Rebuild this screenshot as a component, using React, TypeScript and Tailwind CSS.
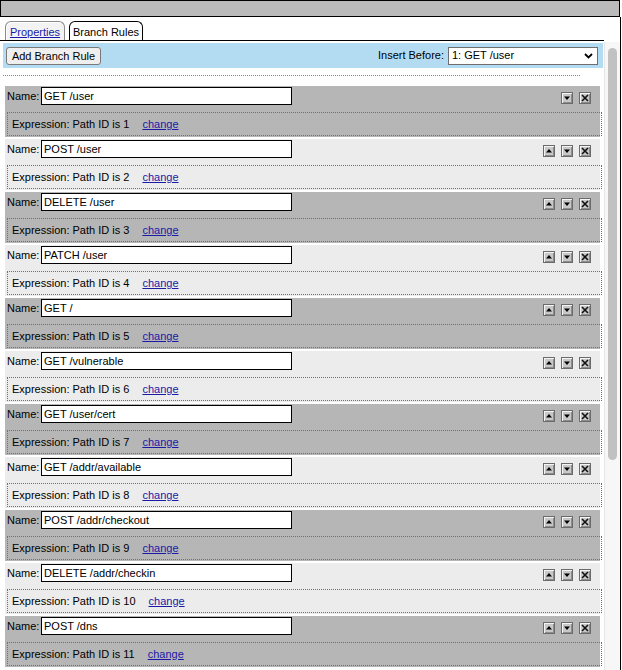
import React from "react";

const rules = [
  "GET /user",
  "POST /user",
  "DELETE /user",
  "PATCH /user",
  "GET /",
  "GET /vulnerable",
  "GET /user/cert",
  "GET /addr/available",
  "POST /addr/checkout",
  "DELETE /addr/checkin",
  "POST /dns",
];

function IconBtn({ kind }: { kind: "up" | "down" | "del" }) {
  return (
    <div className="w-[12px] h-[12px] border border-[#6b6b6b] bg-[#c8c8c8] shadow-[inset_1px_1px_0_#f4f4f4,inset_-1px_-1px_0_#8c8c8c] flex items-center justify-center">
      <svg width="10" height="10" viewBox="0 0 10 10">
        {kind === "up" && <polygon points="2,6.5 8,6.5 5,3" fill="#000" />}
        {kind === "down" && <polygon points="2,3.5 8,3.5 5,7" fill="#000" />}
        {kind === "del" && (
          <path d="M2 2 L8 8 M8 2 L2 8" stroke="#111" strokeWidth="1.6" />
        )}
      </svg>
    </div>
  );
}

function Rule({ idx, name }: { idx: number; name: string }) {
  const dark = idx % 2 === 0;
  return (
    <div className={`h-[51px] mb-[2px] pt-[1px] ${dark ? "bg-[#b6b6b6]" : "bg-[#ececec]"}`}>
      <div className="flex items-center h-[18px]">
        <span className="pl-[2px] w-[36px]">Name:</span>
        <div className="w-[251px] h-[18px] border border-black bg-white pl-[2px] text-[11px] leading-[16px]">
          {name}
        </div>
        <div className="ml-auto mr-[9px] mt-[3px] flex gap-[6px]">
          {idx > 0 ? <IconBtn kind="up" /> : <div className="w-[12px]" />}
          <IconBtn kind="down" />
          <IconBtn kind="del" />
        </div>
      </div>
      <div className="mt-[7px] ml-[2px] w-[595px] h-[24px] border border-dotted border-[#6f6f6f] flex items-center pl-[4px]">
        <span>Expression: Path ID is {idx + 1}</span>
        <a className="ml-[13px] text-[#1a1aa6] underline cursor-pointer">change</a>
      </div>
    </div>
  );
}

export default function App() {
  return (
    <div className="w-[622px] h-[670px] overflow-hidden bg-white text-black text-[11px] font-['Liberation_Sans',Arial,sans-serif]">
      <div className="h-[17px] w-[620px] border border-black bg-[#bababa]" />
      <div className="flex w-[621px] h-[653px] border-r border-black">
        <div className="w-[604px] flex flex-col">
          <div className="h-[24px] flex items-end pl-[5px] gap-[4px] border-b border-black">
            <div className="w-[60px] h-[19px] border border-b-0 border-[#8a8a8a] rounded-t-[6px] bg-[#f3f3f3] shadow-[inset_1px_1px_0_#fff] flex items-center justify-center pt-[2px]">
              <a className="text-[#1a1aa6] underline">Properties</a>
            </div>
            <div className="w-[74px] h-[19px] border border-b-0 border-black rounded-t-[6px] bg-white flex items-center justify-center pt-[2px]">
              Branch Rules
            </div>
          </div>
          <div className="mt-[2px] ml-[3px] w-[600px] h-[25px] bg-[#b3dcf3] flex items-center pl-[3px] pr-[5px]">
            <button className="h-[18px] w-[95px] border border-[#7a7a7a] rounded-[3px] bg-[#efefef] text-[11px] leading-[16px]">
              Add Branch Rule
            </button>
            <span className="ml-auto mr-[4px]">Insert Before:</span>
            <div className="w-[150px] h-[18px] border border-[#6f6f6f] bg-white flex items-center pl-[3px] pr-[4px]">
              <span>1: GET /user</span>
              <svg className="ml-auto" width="9" height="6" viewBox="0 0 9 6">
                <path d="M1 1 L4.5 4.5 L8 1" stroke="#000" strokeWidth="1.8" fill="none" />
              </svg>
            </div>
          </div>
          <div className="mt-[7px] ml-[3px] w-[577px] border-t border-dotted border-[#8a8a8a]" />
          <div className="mt-[10px] ml-[5px] w-[595px]">
            {rules.map((r, i) => (
              <Rule key={i} idx={i} name={r} />
            ))}
          </div>
        </div>
        <div className="flex-1 flex flex-col">
          <div className="h-[25px]" />
          <div className="flex-1 bg-[#f7f7f7] border-l border-[#e6e6e6] pt-[6px] flex justify-center">
            <div className="w-[9px] h-[412px] rounded-full bg-[#c1c1c1]" />
          </div>
        </div>
      </div>
    </div>
  );
}
